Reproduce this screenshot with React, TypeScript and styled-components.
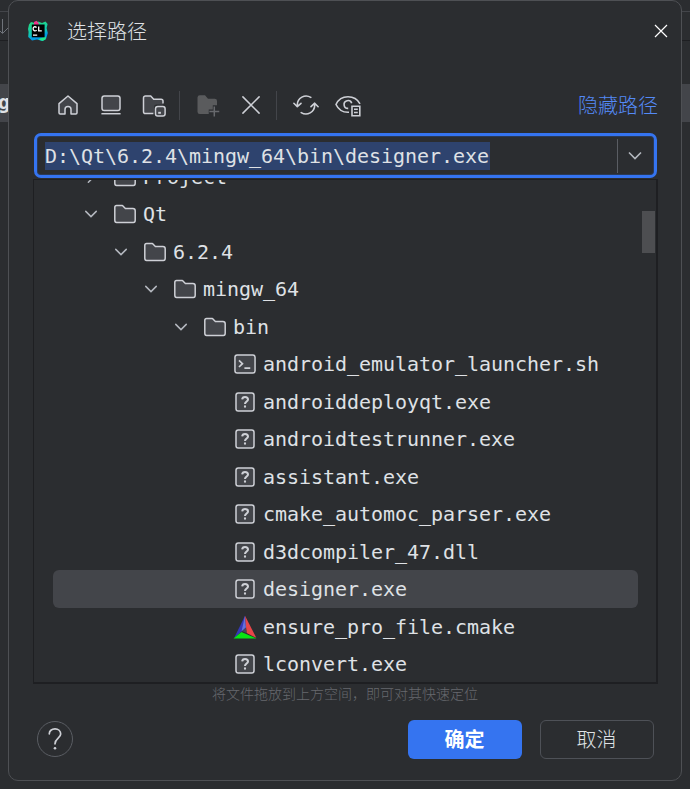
import React from "react";
import styled, { createGlobalStyle, css } from "styled-components";

const cjk = `"Noto Sans CJK SC", sans-serif`;

const GlobalStyle = createGlobalStyle`
  *, *::before, *::after { box-sizing: border-box; }
  body { margin: 0; background: #2b2d30; overflow: hidden; }
  button { font: inherit; color: inherit; }
`;

const Screen = styled.div`
  position: relative;
  width: 690px;
  height: 789px;
  overflow: hidden;
  background: #2b2d30;
`;

const Backdrop = styled.div`
  display: grid;
  grid-template-rows: 12px 29px 43px 38px 1fr;
  font: 700 20px/36px "DejaVu Sans Mono", monospace;
  color: #dfe1e5;
  height: 100%;
`;

const BackdropRow = styled.div<{ $active?: boolean; $line?: string }>`
  display: flex;
  align-items: center;
  overflow: hidden;
  background: ${(p) => (p.$active ? "#43454a" : "transparent")};
  border-bottom: ${(p) => (p.$line ? `1px solid ${p.$line}` : "none")};
`;

const ClippedText = styled.span`
  margin: -2px 0 0 -2px;
`;

const Dialog = styled.section`
  position: absolute;
  left: 8px;
  top: 0;
  width: 674px;
  height: 781px;
  display: flex;
  flex-direction: column;
  padding: 0 24px 0 24px;
  background: #2b2d30;
  border: 1px solid #4e5054;
  border-radius: 10px;
  color: #dfe1e5;
  font-family: ${cjk};
  font-weight: 300;
`;

const TitleBar = styled.header`
  display: flex;
  align-items: center;
  height: 60px;
  margin: 0 -12px 0 -6px;
  font-size: 20px;
`;

const Title = styled.h1`
  flex: 1;
  margin: -1px 0 0 18px;
  font-size: 20px;
  font-weight: 300;
  line-height: 30px;
`;

const CloseButton = styled.button`
  display: flex;
  padding: 0;
  border: 0;
  background: none;
  margin-right: 1px;
`;

const Toolbar = styled.div`
  display: flex;
  align-items: center;
  height: 30px;
  margin-top: 29px;
  padding-left: 22.5px;
`;

const ToolButton = styled.button<{ $gap?: number }>`
  display: flex;
  padding: 0;
  margin-right: ${(p) => p.$gap ?? 19}px;
  border: 0;
  background: none;
`;

const Divider = styled.span<{ $gap: number }>`
  width: 1px;
  height: 29px;
  margin-right: ${(p) => p.$gap}px;
  background: #43454a;
`;

const PathLink = styled.a`
  margin: 0 -1px 0 auto;
  color: #548af7;
  font-size: 20px;
  line-height: 30px;
  white-space: nowrap;
`;

const mono = css`
  font-family: "DejaVu Sans Mono", monospace;
  font-size: 20px;
  font-weight: 400;
  letter-spacing: -0.04px;
  white-space: pre;
`;

const PathField = styled.div`
  display: flex;
  align-items: center;
  flex: none;
  width: 623px;
  height: 45px;
  margin: 13px 0 0 1px;
  padding-left: 8px;
  border: 3px solid #3574f0;
  border-radius: 7px;
  box-shadow: inset 0 0 0 1px #2b3a57;
`;

const Selected = styled.span`
  ${mono}
  height: 28px;
  padding-right: 1px;
  line-height: 29px;
  background: #2e436e;
`;

const DropButton = styled.button`
  display: flex;
  align-items: center;
  justify-content: center;
  width: 37px;
  height: 34px;
  margin: 0 0 0 auto;
  padding: 0 2px 0 0;
  border: 0;
  border-left: 1px solid #5a5d63;
  background: none;
`;

const TreePanel = styled.div`
  display: flex;
  flex: none;
  width: 625px;
  height: 505px;
  margin-top: 1px;
  overflow: hidden;
  border: solid #1e1f22;
  border-width: 1px 2px 2px 1px;
`;

const Tree = styled.ul`
  flex: none;
  list-style: none;
  width: 585px;
  margin: -22.25px 0 0 19px;
  padding: 0;
`;

const Row = styled.li<{ $level: number; $selected?: boolean }>`
  display: flex;
  align-items: center;
  height: 37.5px;
  padding-left: ${(p) => 26 + p.$level * 30}px;
  border-radius: 6px;
  background: ${(p) => (p.$selected ? "#43454a" : "transparent")};
`;

const Twisty = styled.span`
  display: flex;
  width: 24px;
  height: 24px;
  margin-right: 10px;
`;

const Name = styled.span`
  ${mono}
  margin-left: 6px;
  line-height: 36px;
`;

const ScrollThumb = styled.div`
  width: 13px;
  height: 42px;
  margin: 31px 0 0 4px;
  background: #4d4e51;
`;

const Hint = styled.p`
  margin: 0;
  height: 20px;
  color: #67696e;
  font-size: 14px;
  line-height: 18px;
  text-align: center;
`;

const Footer = styled.footer`
  display: flex;
  align-items: center;
  gap: 18px;
  height: 40px;
  margin: 15px 3.5px 0 4px;
`;

const HelpButton = styled.button`
  display: flex;
  align-items: center;
  justify-content: center;
  width: 36px;
  height: 36px;
  margin-right: auto;
  padding: 0;
  border: 1px solid #5a5d63;
  border-radius: 50%;
  background: none;
`;

const ActionButton = styled.button<{ $primary?: boolean }>`
  width: 114px;
  height: 39px;
  padding: 0;
  border: ${(p) => (p.$primary ? "0" : "1.5px solid #4e5157")};
  border-radius: 6px;
  background: ${(p) => (p.$primary ? "#3574f0" : "transparent")};
  color: ${(p) => (p.$primary ? "#ffffff" : "#dfe1e5")};
  font-size: 20px;
  font-weight: ${(p) => (p.$primary ? 600 : 300)};
  line-height: 36px;
`;

const Svg = styled.svg`
  display: block;
  flex: none;
  fill: none;
  stroke: #ced0d6;
`;

const Icon = ({ children }: { children: React.ReactNode }) => (
  <Svg width="24" height="24" viewBox="0 0 16 16">{children}</Svg>
);

const FOLDER =
  "M8.1 4.15 8.25 4.3H13.3A1.5 1.5 0 0 1 14.8 5.8V12.2C14.8 13 14.2 13.6 13.6 13.6H2.4C1.8 13.6 1.2 13 1.2 12.2V3.7C1.2 2.9 1.8 2.3 2.4 2.3H6C6.2 2.3 6.35 2.36 6.45 2.45Z";

const Chevron = ({ right }: { right?: boolean }) => (
  <Icon>
    <path d={right ? "M6.25 4.5 9.75 8 6.25 11.5" : "M4.5 6.25 8 9.75 11.5 6.25"} stroke="#b4b8bf" strokeLinecap="round" />
  </Icon>
);

const FolderIcon = () => (
  <Icon>
    <path d={FOLDER} fill="#43454a" />
  </Icon>
);

const ShellIcon = () => (
  <Icon>
    <rect x="1.3" y="2" width="13.4" height="12" rx="1.5" fill="#43454a" />
    <path d="M4 5.6 6.3 7.8 4 10M7.6 10.8H11.5" strokeWidth="1.15" />
  </Icon>
);

const UnknownIcon = () => (
  <Icon>
    <rect x="2" y="2" width="12" height="12" rx="1.5" fill="#43454a" />
    <path d="M6.1 6.3C6.2 5.1 7 4.6 8 4.6 9.2 4.6 10 5.3 10 6.3 10 7.6 8 7.7 8 9.3" strokeWidth="1.35" />
    <path d="M7.3 11H8.7" strokeWidth="1.4" />
  </Icon>
);

const CMakeIcon = () => (
  <Svg width="24" height="24" viewBox="0 0 24 24">
    <g stroke="none">
      <path d="M12 .8 12.9 12.5 1 23.2Z" fill="#3539b5" />
      <path d="M12 .8 12.9 12.5 8.5 16.5Z" fill="#6670dc" />
      <path d="M12 .8 23.3 22.8 13.6 18Z" fill="#e74649" />
      <path d="M.5 23.5 8.4 16.9 23.5 23.5Z" fill="#08e514" />
      <path d="M12.9 12.6 13.5 18 9 16.2Z" fill="#45475c" />
    </g>
  </Svg>
);

const Logo = () => (
  <Svg width="22" height="22" viewBox="0 0 22 22">
    <defs>
      <linearGradient id="rim" x1="0" y1="0" x2="0.3" y2="1">
        <stop offset="0.2" stopColor="#21d789" />
        <stop offset="0.65" stopColor="#10c6b5" />
        <stop offset="0.85" stopColor="#009ae5" />
      </linearGradient>
    </defs>
    <g stroke="none">
      <path d="M2 4.5 4 2 8 3 11 1.5 15 3 18.5 1.5 20.6 4 19.6 8 20.8 13 19 19 15.5 21 10 19.5 5 20.4 1.2 17 1.6 12 1 9Z" fill="url(#rim)" />
      <path d="M7 2 9.5 .8 12 3.5 10 6H7Z" fill="#ed358c" />
      <path d="M14 18 19 16.5 18.5 19.5 15.5 21 11.5 19.5Z" fill="#21e98a" />
      <rect x="4.8" y="4.5" width="12.8" height="12.8" fill="#000" />
    </g>
    <path d="M9.6 7.4C7.8 6 6.1 7 6.1 8.8S7.9 11.5 9.7 10.2M11.7 6.5V10.8H14.8M6 15.2H10.2" stroke="#fff" strokeWidth="1.3" />
  </Svg>
);

const HomeIcon = () => (
  <Icon>
    <path d="M2 7.1 8 2 14 7.1V13.2A.8.8 0 0 1 13.2 14H10V11A2 2 0 0 0 6 11V14H2.8A.8.8 0 0 1 2 13.2Z" fill="#43454a" strokeLinejoin="round" />
  </Icon>
);

const DesktopIcon = () => (
  <Icon>
    <rect x="2" y="2" width="12" height="9.6" rx="1.5" fill="#43454a" />
    <path d="M1.6 13.8H14.4" />
  </Icon>
);

const ProjectIcon = () => (
  <Icon>
    <path d="M8 13.5H2.4A1.2 1.2 0 0 1 1 12.2V3.3A1.3 1.3 0 0 1 2.3 2H5.8L7.8 4.1H12.7A1.3 1.3 0 0 1 14 5.4V7.7H9.8A1.8 1.8 0 0 0 8 9.5Z" fill="#43454a" stroke="none" />
    <path d="M7.6 13.7H2.4A1.2 1.2 0 0 1 1 12.4V3.3A1.3 1.3 0 0 1 2.3 2H5.8L7.8 4.1H12.7A1.3 1.3 0 0 1 14 5.4V7" />
    <rect x="9" y="9" width="6.4" height="6.4" rx="1.5" fill="#43454a" />
    <path d="M10.8 13.2H12.6" strokeWidth="1.3" />
  </Icon>
);

const NewFolderIcon = () => (
  <Icon>
    <path d="M1 3A1.6 1.6 0 0 1 2.6 1.5H6L8 3.8H12.5A1.5 1.5 0 0 1 14 5.3V8.2H11.2V11H8.5V14H2.5A1.5 1.5 0 0 1 1 12.5Z" fill="#5a5b5d" stroke="none" />
    <path d="M12.2 9V15.6M8.9 12.3H15.5" stroke="#67696d" />
  </Icon>
);

const DeleteIcon = () => (
  <Icon>
    <path d="M2.6 2.6 13.4 13.4M13.4 2.6 2.6 13.4" strokeLinecap="round" />
  </Icon>
);

const RefreshIcon = () => (
  <Svg width="26" height="24" viewBox="0 0 26 24" strokeWidth="1.6">
    <path d="M4.3 13.4V11.8A8.8 8.8 0 0 1 17.8 4.4M21.7 10.6V12.2A8.8 8.8 0 0 1 8.2 19.6M.9 10.3 4.3 13.7 8 10.3M18 13.7 21.7 10.2 25.1 13.7" strokeLinecap="round" strokeLinejoin="round" />
  </Svg>
);

const EyeIcon = () => (
  <Svg width="26" height="24" viewBox="0 0 26 24" strokeWidth="1.6">
    <path d="M14 19.3H13C7.5 19.3 3.1 16 1 11.5 3.1 7 7.5 3.8 13 3.8S22.9 7 25 10.8" />
    <path d="M13.2 15.4A3.9 3.9 0 1 1 16.7 10.3" />
    <path d="M17 13.2H24.8V22.8H17ZM19 16.3H22.8M19 19.5H22.8" />
  </Svg>
);

type Kind = "folder" | "unknown" | "shell" | "cmake";
type Entry = { name: string; level: number; kind: Kind; closed?: boolean; selected?: boolean };

const ICONS: Record<Kind, () => React.JSX.Element> = {
  folder: FolderIcon,
  unknown: UnknownIcon,
  shell: ShellIcon,
  cmake: CMakeIcon,
};

const ENTRIES: Entry[] = [
  { name: "Project", level: 0, kind: "folder", closed: true },
  { name: "Qt", level: 0, kind: "folder" },
  { name: "6.2.4", level: 1, kind: "folder" },
  { name: "mingw_64", level: 2, kind: "folder" },
  { name: "bin", level: 3, kind: "folder" },
  { name: "android_emulator_launcher.sh", level: 4, kind: "shell" },
  { name: "androiddeployqt.exe", level: 4, kind: "unknown" },
  { name: "androidtestrunner.exe", level: 4, kind: "unknown" },
  { name: "assistant.exe", level: 4, kind: "unknown" },
  { name: "cmake_automoc_parser.exe", level: 4, kind: "unknown" },
  { name: "d3dcompiler_47.dll", level: 4, kind: "unknown" },
  { name: "designer.exe", level: 4, kind: "unknown", selected: true },
  { name: "ensure_pro_file.cmake", level: 4, kind: "cmake" },
  { name: "lconvert.exe", level: 4, kind: "unknown" },
];

export default function App() {
  return (
    <Screen>
      <GlobalStyle />
      <Backdrop>
        <BackdropRow $line="#43454a" />
        <BackdropRow $line="#1e1f22">
          <Svg width="9" height="20" viewBox="0 0 9 20">
            <path d="M2.5 3V17M-3 12 2.5 17.5 8 12" stroke="#6f737a" />
          </Svg>
        </BackdropRow>
        <BackdropRow />
        <BackdropRow $active><ClippedText>g</ClippedText></BackdropRow>
        <BackdropRow />
      </Backdrop>
      <Dialog>
        <TitleBar>
          <Logo />
          <Title>选择路径</Title>
          <CloseButton aria-label="关闭">
            <Svg width="14" height="14" viewBox="0 0 14 14">
              <path d="M1 1 13 13M13 1 1 13" stroke="#fff" strokeWidth="1.2" />
            </Svg>
          </CloseButton>
        </TitleBar>
        <Toolbar>
          <ToolButton><HomeIcon /></ToolButton>
          <ToolButton><DesktopIcon /></ToolButton>
          <ToolButton $gap={13.5}><ProjectIcon /></ToolButton>
          <Divider $gap={16} />
          <ToolButton $gap={18.5}><NewFolderIcon /></ToolButton>
          <ToolButton $gap={13.5}><DeleteIcon /></ToolButton>
          <Divider $gap={15.5} />
          <ToolButton $gap={16}><RefreshIcon /></ToolButton>
          <ToolButton><EyeIcon /></ToolButton>
          <PathLink>隐藏路径</PathLink>
        </Toolbar>
        <PathField>
          <Selected>{"D:\\Qt\\6.2.4\\mingw_64\\bin\\designer.exe"}</Selected>
          <DropButton>
            <Svg width="14" height="9" viewBox="0 0 14 9" strokeWidth="1.6">
              <path d="M1 1.5 7 7.5 13 1.5" stroke="#b4b8bf" />
            </Svg>
          </DropButton>
        </PathField>
        <TreePanel>
          <Tree>
            {ENTRIES.map((e) => {
              const EntryIcon = ICONS[e.kind];
              return (
                <Row key={e.name} $level={e.level} $selected={e.selected}>
                  <Twisty>{e.kind === "folder" && <Chevron right={e.closed} />}</Twisty>
                  <EntryIcon />
                  <Name>{e.name}</Name>
                </Row>
              );
            })}
          </Tree>
          <ScrollThumb />
        </TreePanel>
        <Hint>将文件拖放到上方空间，即可对其快速定位</Hint>
        <Footer>
          <HelpButton aria-label="帮助">
            <Svg width="16" height="24" viewBox="0 0 16 24">
              <path d="M2.3 6.8C2.3 3.8 4.7 1.9 8 1.9S13.7 3.9 13.7 7C13.7 11 8 11.5 8 16.8" strokeWidth="1.7" strokeLinecap="round" />
              <circle cx="8" cy="21.3" r="1.3" fill="#ced0d6" stroke="none" />
            </Svg>
          </HelpButton>
          <ActionButton $primary>确定</ActionButton>
          <ActionButton>取消</ActionButton>
        </Footer>
      </Dialog>
    </Screen>
  );
}
